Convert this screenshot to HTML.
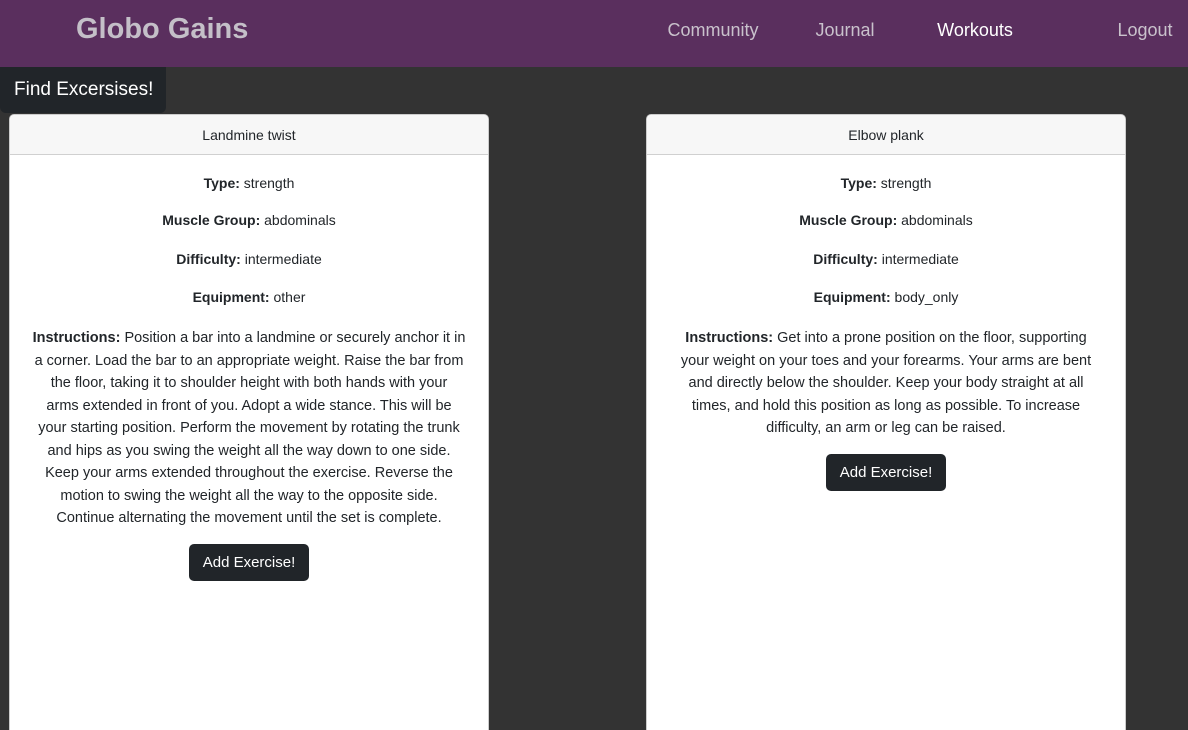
<!DOCTYPE html>
<html><head><style>
*{box-sizing:border-box;margin:0;padding:0}
html,body{width:1188px;height:730px;overflow:hidden}
body{background:#333;font-family:"Liberation Sans",sans-serif;color:#212529;position:relative}
.nav{position:absolute;left:0;top:0;width:1188px;height:67px;background:#5a2f5e}
.brand{position:absolute;left:76px;top:13px;font-size:29px;font-weight:bold;color:#c4bfc8}
.nl{position:absolute;top:20px;font-size:18px;color:#c9c2cc;transform:translateX(-50%);white-space:nowrap}
.find{position:absolute;left:0;top:67px;width:166px;height:46px;background:#212529;color:#fff;font-size:19px;line-height:46px;padding-left:14px;border-radius:0 0 6px 6px}
.card{position:absolute;top:114px;width:480px;height:616px;background:#fff;border:1px solid #ccc;border-bottom:none;border-radius:5px 5px 0 0;text-align:center;font-size:14px}
.hd{height:40px;background:#f7f7f7;border-bottom:1px solid #d0d0d0;line-height:40px;border-radius:5px 5px 0 0}
.p{position:absolute;left:0;width:100%;white-space:nowrap}
.ins{position:absolute;left:0;width:100%;top:212px;line-height:22.5px;white-space:nowrap;font-size:14.5px}
.btn{position:absolute;width:120px;height:37px;background:#212529;color:#fff;border-radius:5px;font-size:15px;line-height:37px;left:50%;margin-left:-60px}
</style></head><body>
<div class="nav">
<div class="brand">Globo Gains</div>
<div class="nl" style="left:713px">Community</div>
<div class="nl" style="left:845px">Journal</div>
<div class="nl" style="left:975px;color:#fff">Workouts</div>
<div class="nl" style="left:1145px">Logout</div>
</div>
<div class="find">Find Excersises!</div>
<div class="card" style="left:9px">
<div class="hd">Landmine twist</div>
<div class="p" style="top:60px"><b>Type:</b> strength</div>
<div class="p" style="top:97px"><b>Muscle Group:</b> abdominals</div>
<div class="p" style="top:136px"><b>Difficulty:</b> intermediate</div>
<div class="p" style="top:174px"><b>Equipment:</b> other</div>
<div class="ins"><b>Instructions:</b> Position a bar into a landmine or securely anchor it in<br>a corner. Load the bar to an appropriate weight. Raise the bar from<br>the floor, taking it to shoulder height with both hands with your<br>arms extended in front of you. Adopt a wide stance. This will be<br>your starting position. Perform the movement by rotating the trunk<br>and hips as you swing the weight all the way down to one side.<br>Keep your arms extended throughout the exercise. Reverse the<br>motion to swing the weight all the way to the opposite side.<br>Continue alternating the movement until the set is complete.</div>
<div class="btn" style="top:429px">Add Exercise!</div>
</div>
<div class="card" style="left:646px">
<div class="hd">Elbow plank</div>
<div class="p" style="top:60px"><b>Type:</b> strength</div>
<div class="p" style="top:97px"><b>Muscle Group:</b> abdominals</div>
<div class="p" style="top:136px"><b>Difficulty:</b> intermediate</div>
<div class="p" style="top:174px"><b>Equipment:</b> body_only</div>
<div class="ins"><b>Instructions:</b> Get into a prone position on the floor, supporting<br>your weight on your toes and your forearms. Your arms are bent<br>and directly below the shoulder. Keep your body straight at all<br>times, and hold this position as long as possible. To increase<br>difficulty, an arm or leg can be raised.</div>
<div class="btn" style="top:339px">Add Exercise!</div>
</div>
</body></html>
